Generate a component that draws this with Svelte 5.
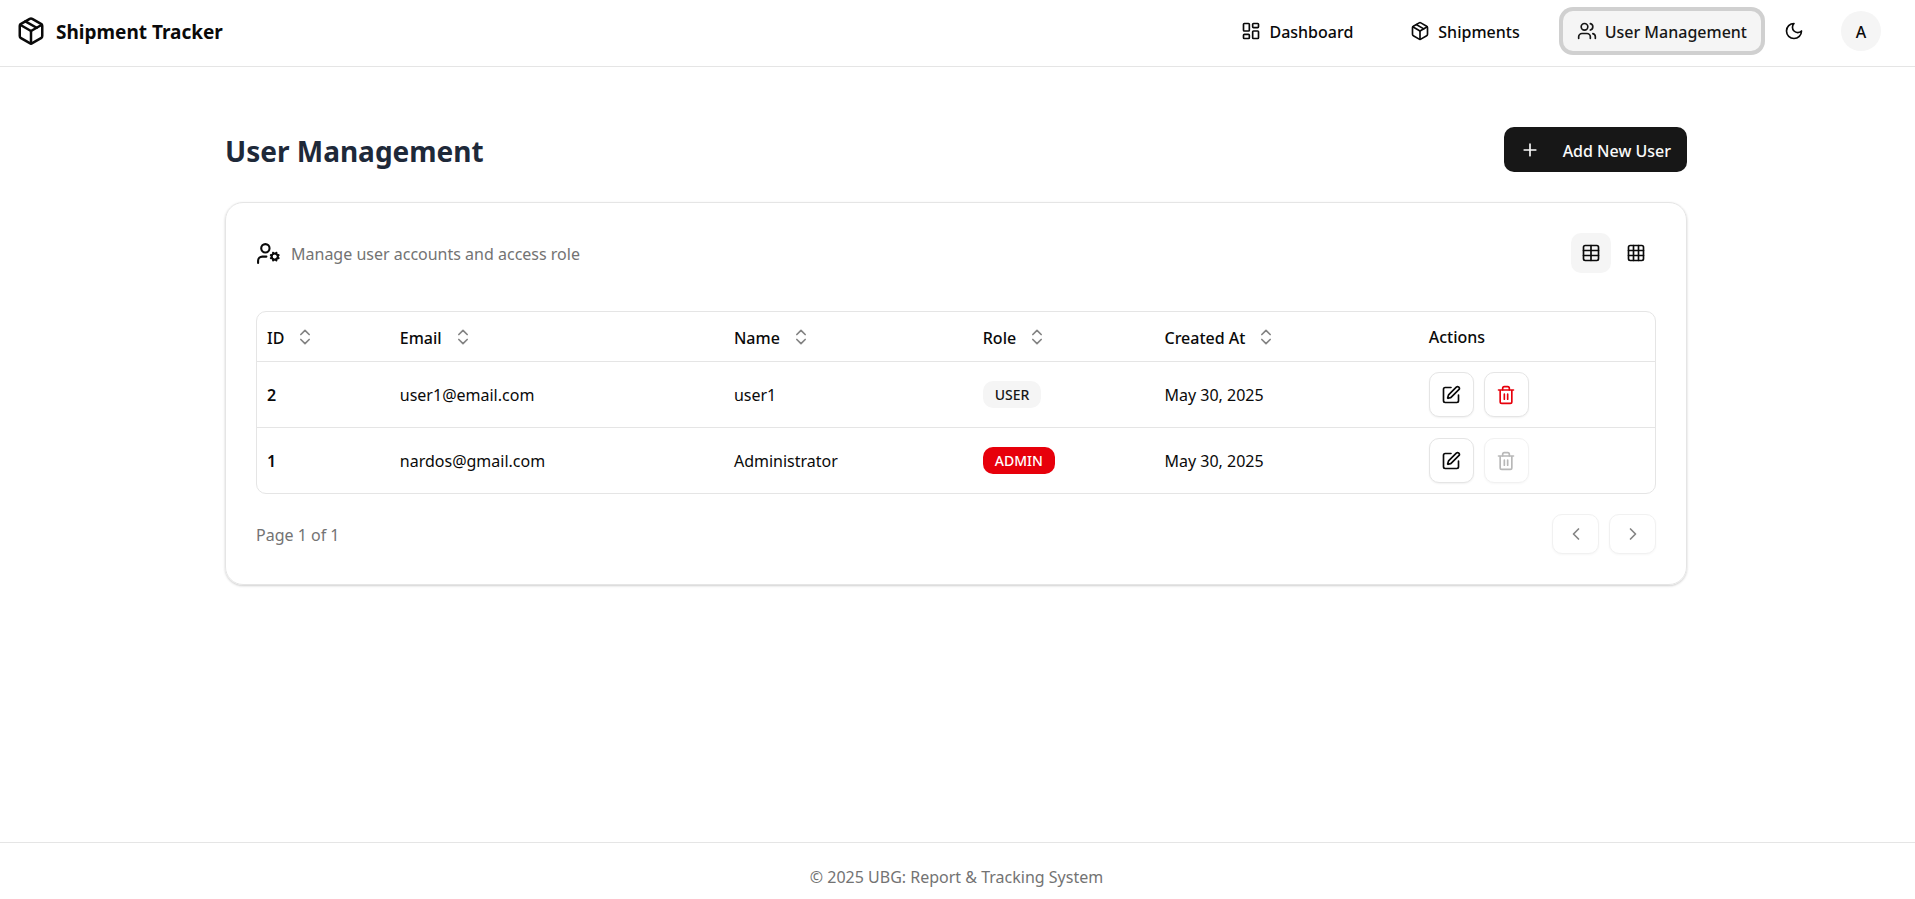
<script>
  const columns = [
    { label: 'ID', key: 'id', sortable: true },
    { label: 'Email', key: 'email', sortable: true },
    { label: 'Name', key: 'name', sortable: true },
    { label: 'Role', key: 'role', sortable: true },
    { label: 'Created At', key: 'created', sortable: true },
    { label: 'Actions', key: 'actions', sortable: false }
  ];
  const users = [
    { id: 2, email: 'user1@email.com', name: 'user1', role: 'USER', created: 'May 30, 2025' },
    { id: 1, email: 'nardos@gmail.com', name: 'Administrator', role: 'ADMIN', created: 'May 30, 2025' }
  ];
  let view = $state('table');
</script>

{#snippet packageIcon()}
  <path d="M11 21.73a2 2 0 0 0 2 0l7-4A2 2 0 0 0 21 16V8a2 2 0 0 0-1-1.73l-7-4a2 2 0 0 0-2 0l-7 4A2 2 0 0 0 3 8v8a2 2 0 0 0 1 1.73z" />
  <path d="M12 22V12" />
  <path d="M3.29 7 12 12l8.71-5" />
  <path d="m7.5 4.27 9 5.15" />
{/snippet}

<div class="page">
  <header>
    <a class="brand" href="#home">
      <svg class="logo" viewBox="0 0 24 24" aria-hidden="true">{@render packageIcon()}</svg>
      <span>Shipment Tracker</span>
    </a>
    <nav>
      <a class="link" href="#dashboard">
        <svg viewBox="0 0 24 24" aria-hidden="true">
          <rect width="7" height="9" x="3" y="3" rx="1" />
          <rect width="7" height="5" x="14" y="3" rx="1" />
          <rect width="7" height="9" x="14" y="12" rx="1" />
          <rect width="7" height="5" x="3" y="16" rx="1" />
        </svg>
        <span>Dashboard</span>
      </a>
      <a class="link" href="#shipments">
        <svg viewBox="0 0 24 24" aria-hidden="true">{@render packageIcon()}</svg>
        <span>Shipments</span>
      </a>
      <a class="link active" href="#users" aria-current="page">
        <svg viewBox="0 0 24 24" aria-hidden="true">
          <path d="M16 21v-2a4 4 0 0 0-4-4H6a4 4 0 0 0-4 4v2" />
          <circle cx="9" cy="7" r="4" />
          <path d="M22 21v-2a4 4 0 0 0-3-3.87" />
          <path d="M16 3.13a4 4 0 0 1 0 7.75" />
        </svg>
        <span>User Management</span>
      </a>
    </nav>
    <button class="theme" aria-label="Toggle theme">
      <svg viewBox="0 0 24 24" aria-hidden="true"><path d="M12 3a6 6 0 0 0 9 9 9 9 0 1 1-9-9Z" /></svg>
    </button>
    <button class="avatar">A</button>
  </header>

  <main>
    <div class="container">
      <div class="title-row">
        <h1>User Management</h1>
        <button class="primary">
          <svg viewBox="0 0 24 24" aria-hidden="true"><path d="M5 12h14M12 5v14" /></svg>
          <span>Add New User</span>
        </button>
      </div>

      <section class="card">
        <div class="card-head">
          <svg class="cog" viewBox="0 0 24 24" aria-hidden="true">
            <path d="M10 15H6a4 4 0 0 0-4 4v2" />
            <circle cx="9" cy="7" r="4" />
            <circle cx="18" cy="15" r="3" />
            <path d="m14.305 16.53.923-.382M15.228 13.852l-.923-.383M16.852 12.228l-.383-.923M16.852 17.772l-.383.924M19.148 12.228l.383-.923M19.53 18.696l-.382-.924M20.772 13.852l.924-.383M20.772 16.148l.924.383" />
          </svg>
          <p>Manage user accounts and access role</p>
          <div class="views">
            <button class:selected={view === 'table'} aria-label="Table view" onclick={() => (view = 'table')}>
              <svg viewBox="0 0 24 24" aria-hidden="true">
                <rect width="18" height="18" x="3" y="3" rx="2" />
                <path d="M12 3v18M3 9h18M3 15h18" />
              </svg>
            </button>
            <button class:selected={view === 'grid'} aria-label="Grid view" onclick={() => (view = 'grid')}>
              <svg viewBox="0 0 24 24" aria-hidden="true">
                <rect width="18" height="18" x="3" y="3" rx="2" />
                <path d="M3 9h18M3 15h18M9 3v18M15 3v18" />
              </svg>
            </button>
          </div>
        </div>

        <div class="table-wrap">
          <table>
            <thead>
              <tr>
                {#each columns as column}
                  <th class={column.key} scope="col">
                    {#if column.sortable}
                      <button class="sort">
                        <span>{column.label}</span>
                        <svg viewBox="0 0 24 24" aria-hidden="true"><path d="m7 15 5 5 5-5M7 9l5-5 5 5" /></svg>
                      </button>
                    {:else}
                      {column.label}
                    {/if}
                  </th>
                {/each}
              </tr>
            </thead>
            <tbody>
              {#each users as user}
                <tr>
                  <td class="strong">{user.id}</td>
                  <td>{user.email}</td>
                  <td>{user.name}</td>
                  <td><span class="badge" class:admin={user.role === 'ADMIN'}>{user.role}</span></td>
                  <td>{user.created}</td>
                  <td>
                    <div class="row-actions">
                      <button class="outline" aria-label="Edit {user.name}">
                        <svg viewBox="0 0 24 24" aria-hidden="true">
                          <path d="M12 3H5a2 2 0 0 0-2 2v14a2 2 0 0 0 2 2h14a2 2 0 0 0 2-2v-7" />
                          <path d="M18.375 2.625a1 1 0 0 1 3 3l-9.013 9.014a2 2 0 0 1-.853.505l-2.873.84a.5.5 0 0 1-.62-.62l.84-2.873a2 2 0 0 1 .506-.852z" />
                        </svg>
                      </button>
                      <button class="outline delete" aria-label="Delete {user.name}" disabled={user.role === 'ADMIN'}>
                        <svg viewBox="0 0 24 24" aria-hidden="true">
                          <path d="M3 6h18M19 6v14c0 1-1 2-2 2H7c-1 0-2-1-2-2V6" />
                          <path d="M8 6V4c0-1 1-2 2-2h4c1 0 2 1 2 2v2M10 11v6M14 11v6" />
                        </svg>
                      </button>
                    </div>
                  </td>
                </tr>
              {/each}
            </tbody>
          </table>
        </div>

        <div class="pager">
          <p>Page 1 of 1</p>
          <button class="outline step" aria-label="Previous page" disabled>
            <svg viewBox="0 0 24 24" aria-hidden="true"><path d="m15 18-6-6 6-6" /></svg>
          </button>
          <button class="outline step" aria-label="Next page" disabled>
            <svg viewBox="0 0 24 24" aria-hidden="true"><path d="m9 18 6-6-6-6" /></svg>
          </button>
        </div>
      </section>
    </div>
  </main>

  <footer>© 2025 UBG: Report &amp; Tracking System</footer>
</div>

<style>
  :global(body) {
    margin: 0;
    background: #fff;
  }

  .page {
    display: flex;
    flex-direction: column;
    min-height: 100vh;
    color: #0a0a0a;
    font-family: 'Segoe UI', 'Noto Sans', 'Open Sans', sans-serif;
    font-size: 16px;
    line-height: 24px;
  }

  .page * {
    box-sizing: border-box;
  }

  svg {
    width: 20px;
    height: 20px;
    flex: none;
    fill: none;
    stroke: currentColor;
    stroke-width: 2;
    stroke-linecap: round;
    stroke-linejoin: round;
  }

  button {
    display: inline-flex;
    align-items: center;
    justify-content: center;
    padding: 0;
    border: 0;
    background: none;
    color: inherit;
    font: inherit;
    cursor: pointer;
  }

  a {
    color: inherit;
    text-decoration: none;
  }

  p,
  h1 {
    margin: 0;
  }

  p,
  .brand span,
  .link span,
  .primary span,
  .sort span {
    padding-top: 2px;
  }

  header {
    display: flex;
    align-items: center;
    height: 67px;
    padding: 0 34px 4px 16px;
    border-bottom: 1px solid #e5e5e5;
  }

  .brand {
    display: flex;
    align-items: center;
    gap: 10px;
    font-size: 19px;
    font-weight: 700;
  }

  .logo {
    width: 30px;
    height: 30px;
  }

  nav {
    display: flex;
    gap: 29px;
    margin-left: auto;
  }

  .link {
    display: flex;
    align-items: center;
    gap: 8px;
    height: 40px;
    padding: 0 14px;
    border-radius: 10px;
    font-weight: 500;
  }

  .active {
    background: #f5f5f5;
    color: #171717;
    box-shadow: 0 0 0 4px #d0d0d0;
  }

  .theme {
    width: 40px;
    height: 40px;
    margin: 0 27px 0 13px;
  }

  .avatar {
    width: 40px;
    height: 40px;
    padding-top: 2px;
    border-radius: 50%;
    background: #f5f5f5;
    font-weight: 500;
  }

  main {
    flex: 1;
    padding: 60px 17px 60px 14px;
  }

  .container {
    max-width: 1462px;
    margin: 0 auto;
  }

  .title-row {
    display: flex;
    align-items: center;
    justify-content: space-between;
    margin-bottom: 30px;
  }

  h1 {
    padding-top: 3px;
    color: #1e2939;
    font-size: 28px;
    line-height: 42px;
    font-weight: 700;
  }

  .primary {
    gap: 23px;
    height: 45px;
    padding: 0 16px;
    border-radius: 10px;
    background: #171717;
    color: #fafafa;
    font-weight: 500;
  }

  .card {
    padding: 30px;
    border: 1px solid #e5e5e5;
    border-radius: 18px;
    box-shadow: 0 1px 3px rgb(0 0 0 / 0.1), 0 1px 2px rgb(0 0 0 / 0.1);
  }

  .card-head {
    display: flex;
    align-items: center;
    gap: 10px;
    margin-bottom: 38px;
  }

  .cog {
    width: 25px;
    height: 25px;
  }

  .card-head p,
  .pager p {
    color: #737373;
  }

  .views {
    display: flex;
    gap: 5px;
    margin-left: auto;
  }

  .views button {
    width: 40px;
    height: 40px;
    border-radius: 10px;
  }

  .views .selected {
    background: #f5f5f5;
  }

  .table-wrap {
    border: 1px solid #e5e5e5;
    border-radius: 10px;
    overflow: hidden;
  }

  table {
    width: 100%;
    border-collapse: collapse;
    table-layout: fixed;
  }

  th,
  td {
    padding: 1px 10px 0;
    text-align: left;
  }

  th {
    height: 49px;
    font-weight: 500;
  }

  td {
    height: 66px;
  }

  tbody tr {
    border-top: 1px solid #e5e5e5;
  }

  .id { width: 9.5%; }
  .email { width: 23.9%; }
  .name { width: 17.8%; }
  .role { width: 13%; }
  .created { width: 18.9%; }
  .actions { width: auto; }

  .sort {
    gap: 11px;
    font-weight: 500;
  }

  .sort svg {
    color: #848484;
  }

  .strong {
    font-weight: 600;
  }

  .badge {
    display: inline-block;
    padding: 0 12px;
    border-radius: 10px;
    background: #f5f5f5;
    color: #171717;
    font-size: 14px;
    line-height: 27px;
    font-weight: 500;
    vertical-align: middle;
  }

  .admin {
    background: #e7000b;
    color: #fff;
  }

  .row-actions {
    display: flex;
    gap: 10px;
  }

  .outline {
    width: 45px;
    height: 45px;
    border: 1px solid #e5e5e5;
    border-radius: 10px;
    background: #fff;
    box-shadow: 0 1px 2px rgb(0 0 0 / 0.06);
  }

  .outline:disabled {
    opacity: 0.5;
    cursor: default;
  }

  .delete {
    color: #e7000b;
  }

  .delete:disabled {
    color: #737373;
  }

  .pager {
    display: flex;
    align-items: center;
    gap: 10px;
    margin-top: 20px;
  }

  .pager p {
    margin-right: auto;
  }

  .step {
    width: 47px;
    height: 40px;
  }

  footer {
    padding: 22px 18px 10px 16px;
    border-top: 1px solid #e5e5e5;
    color: #737373;
    text-align: center;
  }
</style>
